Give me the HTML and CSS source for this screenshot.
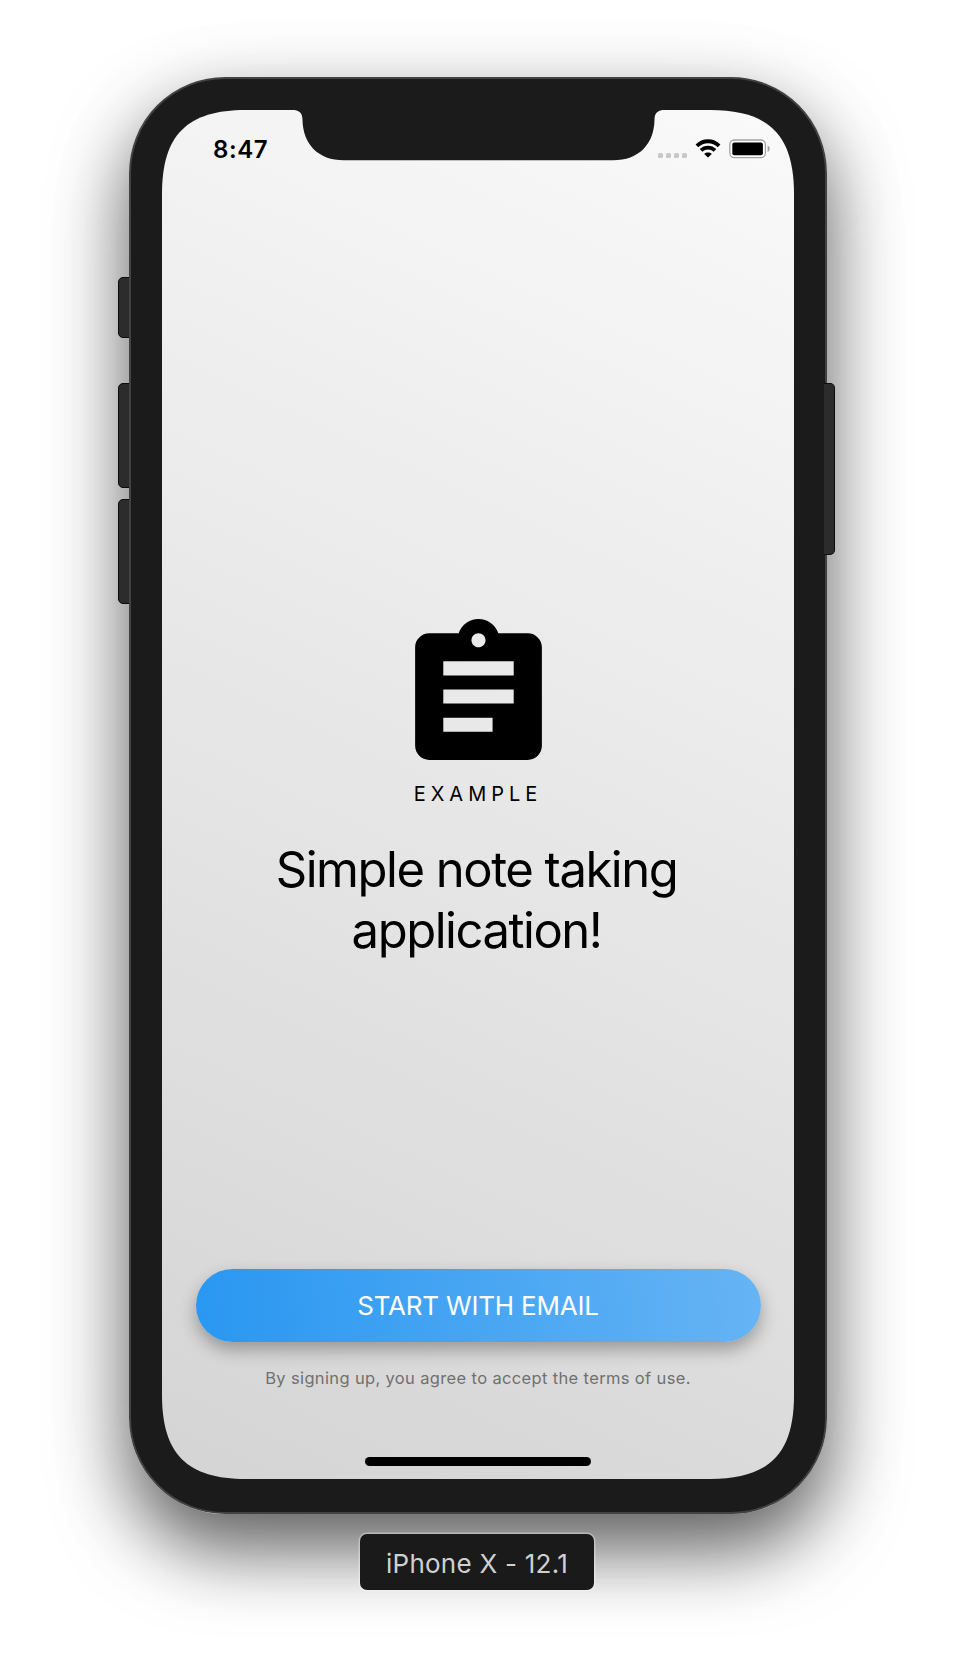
FILE: index.html
```html
<!DOCTYPE html>
<html lang="en">
<head>
<meta charset="utf-8">
<title>iPhone X - 12.1</title>
<link rel="stylesheet" href="styles.css">
</head>
<body>
<main class="simulator">
  <div class="device">
    <span class="key key-mute"></span>
    <span class="key key-up"></span>
    <span class="key key-down"></span>
    <div class="bezel">
      <div class="screen">
        <svg class="notch" viewBox="0 0 632 52" aria-hidden="true">
          <path d="M130 0C137 0 140.500 2.500 140.500 10C141 34 156 50.300 182 50.300H451C477 50.300 492 34 492.500 10C492.500 2.500 496 0 503 0Z"/>
        </svg>
        <header class="status">
          <span class="clock">8:47</span>
          <div class="indicators">
            <span class="signal"><i></i><i></i><i></i><i></i></span>
            <svg class="wifi" viewBox="0 0 26 19" aria-hidden="true">
              <path class="arc" d="M1.900 6.900C8.200 .700 17.800 .700 24.100 6.900"/>
              <path class="arc" d="M6 11.400C10 7.600 16 7.600 20 11.400"/>
              <path d="M13 18.600L9.200 14.900C11.300 13 14.700 13 16.800 14.900Z"/>
            </svg>
            <svg class="battery" viewBox="0 0 42 20" aria-hidden="true">
              <rect class="shell" x=".8" y="1" width="35.600" height="17.600" rx="4.500"/>
              <rect x="3.300" y="3.400" width="30.600" height="12.800" rx="2"/>
              <path class="tip" d="M38.600 6.600C41.400 7.600 41.400 12 38.600 13Z"/>
            </svg>
          </div>
        </header>
        <section class="intro">
          <svg class="logo" viewBox="0 0 24 24" aria-hidden="true">
            <path d="M19 3h-4.180C14.400 1.840 13.300 1 12 1c-1.300 0-2.400.84-2.820 2H5c-1.100 0-2 .9-2 2v14c0 1.100.9 2 2 2h14c1.100 0 2-.9 2-2V5c0-1.100-.9-2-2-2zm-7 0c.55 0 1 .45 1 1s-.45 1-1 1-1-.45-1-1 .45-1 1-1zm2 14H7v-2h7v2zm3-4H7v-2h10v2zm0-4H7V7h10v2z"/>
          </svg>
          <p class="brand">EXAMPLE</p>
          <h1 class="headline">Simple note taking<br>application!</h1>
        </section>
        <section class="signup">
          <button class="start" type="button">START WITH EMAIL</button>
          <p class="terms">By signing up, you agree to accept the terms of use.</p>
        </section>
        <span class="home"></span>
      </div>
    </div>
    <span class="key key-power"></span>
  </div>
  <div class="tag">iPhone X - 12.1</div>
</main>
</body>
</html>
```
FILE: styles.css
```css
* { box-sizing: border-box; }
body {
  margin: 0;
  background: #fff;
  color: #000;
  font-family: Inter, "Liberation Sans", sans-serif;
}
h1, p { margin: 0; font-weight: 400; }
.simulator {
  display: flex;
  flex-direction: column;
  align-items: center;
  height: 1662px;
  padding-top: 77px;
  overflow: hidden;
}
.device {
  position: relative;
  flex: none;
  width: 698px;
  height: 1437px;
  border-radius: 96px;
  box-shadow: 0 35px 74px rgba(0, 0, 0, .62), 0 20px 110px rgba(0, 0, 0, .06);
}
.bezel {
  position: relative;
  height: 100%;
  padding: 31px;
  border: 2px solid #414242;
  border-radius: 96px;
  background: #1b1b1b;
}
.key {
  position: absolute;
  left: -11px;
  width: 20px;
  border: 1.500px solid #0c0c0c;
  border-radius: 5px;
  background: #2c2c2c;
}
.key-mute { top: 200px; height: 61px; }
.key-up { top: 306px; height: 105px; }
.key-down { top: 422px; height: 105px; }
.key-power {
  top: 306px;
  left: 695px;
  width: 10.500px;
  height: 172px;
  border-left: 0;
  border-radius: 0 5px 5px 0;
}
.screen {
  position: relative;
  display: flex;
  flex-direction: column;
  height: 1369px;
  background: linear-gradient(24.8deg, #d4d4d4, #fafafa);
  clip-path: path("M0 84C0 25 25 0 84 0H548C607 0 632 25 632 84V1285C632 1344 607 1369 548 1369H84C25 1369 0 1344 0 1285Z");
}
.notch {
  position: absolute;
  top: 0;
  left: 0;
  width: 632px;
  height: 52px;
  fill: #1b1b1b;
}
.status {
  display: flex;
  justify-content: space-between;
  height: 74px;
  padding: 24px 23px 0 51px;
}
.clock {
  padding-top: 1px;
  font-size: 24px;
  font-weight: 600;
  line-height: 30px;
  letter-spacing: .6px;
}
.indicators {
  display: flex;
  align-items: flex-start;
  padding-top: 5px;
}
.signal { display: flex; gap: 2.600px; margin: 14px 8px 0 0; }
.signal i {
  width: 5.300px;
  height: 5.300px;
  border-radius: 1.600px;
  background: #c8c8c8;
}
.wifi { width: 26px; height: 19px; margin-right: 8px; }
.arc { fill: none; stroke: #000; stroke-width: 3.800; }
.battery { width: 42px; height: 20px; }
.shell { fill: #fdfdfd; stroke: #a3a3a3; stroke-width: 1.300; }
.tip { fill: #a3a3a3; }
.intro {
  display: flex;
  flex-direction: column;
  align-items: center;
  padding-top: 428px;
}
.logo { width: 169px; height: 169px; }
.brand {
  margin-top: 1px;
  font-size: 20px;
  line-height: 24px;
  letter-spacing: 5px;
}
.headline {
  margin: 34px 3px 0 0;
  font-size: 49px;
  line-height: 60.700px;
  letter-spacing: -1.480px;
  text-align: center;
}
.signup {
  display: flex;
  flex-direction: column;
  gap: 25px;
  margin-top: auto;
  padding: 0 33.500px;
}
.start {
  height: 73px;
  padding: 0;
  border: 0;
  border-radius: 37px;
  background: linear-gradient(82.6deg, #2997f1, #66b4f4);
  box-shadow: 0 8px 17px rgba(0, 0, 0, .3);
  color: #fff;
  font: 400 26px/73px Inter, "Liberation Sans", sans-serif;
  letter-spacing: -.2px;
}
.terms {
  color: #707070;
  font-size: 16.500px;
  line-height: 22px;
  letter-spacing: .355px;
  text-align: center;
}
.home {
  align-self: center;
  width: 226px;
  height: 8.500px;
  margin: 68px 0 13.500px;
  border-radius: 5px;
  background: #000;
}
.tag {
  position: relative;
  flex: none;
  width: 234px;
  height: 56px;
  margin: 20px 2px 0 0;
  border-radius: 7px;
  background: #1a1a1a;
  box-shadow: 0 0 0 1.500px rgba(255, 255, 255, .35);
  color: #d0d0d0;
  font-size: 26px;
  line-height: 60px;
  letter-spacing: .25px;
  text-align: center;
}
```
